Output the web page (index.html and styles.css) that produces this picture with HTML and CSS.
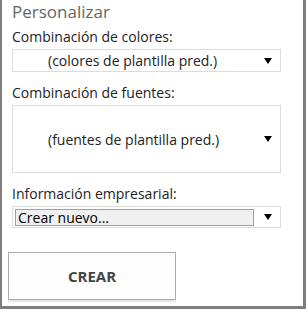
FILE: index.html
```html
<!DOCTYPE html>
<html lang="es">
<head>
<meta charset="UTF-8" />
<title>Personalizar</title>
<link rel="stylesheet" href="styles.css">
</head>
<body>
<div class="pane">
  <h2 class="title">Personalizar</h2>

  <label class="label first">Combinación de colores:</label>
  <div class="select">
    <span class="value">(colores de plantilla pred.)</span>
    <span class="caret"></span>
  </div>

  <label class="label">Combinación de fuentes:</label>
  <div class="select tall">
    <span class="value">(fuentes de plantilla pred.)</span>
    <span class="caret"></span>
  </div>

  <label class="label">Información empresarial:</label>
  <div class="select combo">
    <span class="field">Crear nuevo...</span>
    <span class="caret"></span>
  </div>

  <button class="btn" type="button">CREAR</button>
</div>
</body>
</html>
```

FILE: styles.css
```css
html, body {
  margin: 0;
  background: #fff;
}
.pane {
  width: 306px;
  height: 309px;
  box-sizing: border-box;
  border-left: 2px solid #7f7f7f;
  border-right: 3px solid #7f7f7f;
  border-bottom: 3px solid #7f7f7f;
  padding: 0 22px 0 10px;
  font-family: "Open Sans", "Noto Sans", sans-serif;
  color: #222;
  display: flex;
  flex-direction: column;
}
.title {
  margin: 0;
  font-size: 17px;
  font-weight: 400;
  color: #666;
  line-height: 23px;
}
.label {
  display: block;
  font-size: 14px;
  line-height: 18px;
  margin-top: 12px;
  margin-bottom: 3px;
}
.label.first {
  margin-top: 5px;
}
/* dropdowns */
.select {
  height: 23px;
  box-sizing: border-box;
  border: 1px solid #dcdcdc;
  display: flex;
  align-items: center;
  padding: 0 8px 0 0;
  font-size: 14px;
}
.select .value {
  flex: 1;
  padding-left: 35px;
}
.select.tall {
  height: 68px;
}
.select.combo {
  height: 22px;
  padding-left: 2px;
}
.select .field {
  flex: 1;
  height: 17px;
  line-height: 16px;
  box-sizing: border-box;
  border: 1px solid #a0a0a0;
  background: #f0f0f0;
  color: #000;
  padding-left: 2px;
  margin-right: 10px;
}
.caret {
  width: 0;
  height: 0;
  border-left: 4.5px solid transparent;
  border-right: 4.5px solid transparent;
  border-top: 6px solid #000;
}
.btn {
  margin: 24px 0 0 -4px;
  width: 168px;
  height: 48px;
  border: 1px solid #ababab;
  background: #fdfdfd;
  box-shadow: 0 2px 0 #e6e6e6;
  font-family: inherit;
  font-size: 15px;
  font-weight: 700;
  color: #444;
}
```
